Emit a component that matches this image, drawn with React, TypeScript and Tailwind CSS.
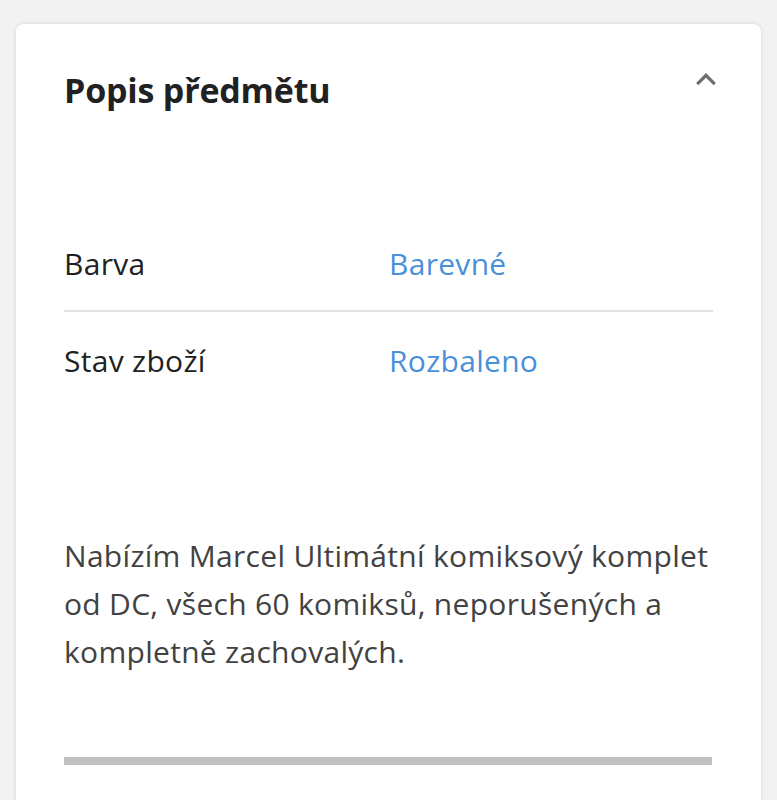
import React from "react";

export default function App() {
  const font = { fontFamily: '"Open Sans", "Noto Sans", sans-serif' };
  return (
    <div className="min-h-[800px] bg-[#f2f2f2] px-4 pt-6" style={font}>
      <div className="rounded-t-lg bg-white shadow-[0_0_4px_rgba(0,0,0,0.12)] px-12 pt-[42px] pb-10 min-h-[776px]">
        <div className="flex items-start justify-between">
          <h2 className="text-[34px] font-bold text-[#212121] leading-[48px] tracking-[-0.2px]">Popis předmětu</h2>
          <svg width="28" height="28" viewBox="0 0 24 24" className="mt-[0px] mr-[-7px]" fill="none" stroke="#6e6e6e" strokeWidth="2.8">
            <path d="M4.5 15.5l7.5-7.5 7.5 7.5" />
          </svg>
        </div>
        <div className="mt-[124px]">
          <div className="flex items-center h-[50px] text-[30px] tracking-[0.3px]">
            <span className="w-[325px] text-[#212121]">Barva</span>
            <span className="text-[#4a90d9]">Barevné</span>
          </div>
          <div className="mt-[22px] border-t-2 border-[#e3e3e3]" />
          <div className="mt-[23px] flex items-center h-[50px] text-[30px] tracking-[0.3px]">
            <span className="w-[325px] text-[#212121]">Stav zboží</span>
            <span className="text-[#4a90d9]">Rozbaleno</span>
          </div>
        </div>
        <p className="mt-[147px] text-[30px] leading-[48px] text-[#424242] tracking-[0.3px]">
          Nabízím Marcel Ultimátní komiksový komplet od DC, všech 60 komiksů, neporušených a kompletně zachovalých.
        </p>
        <div className="mt-[81px] h-2 w-[648px] bg-[#c0c0c0]" />
      </div>
    </div>
  );
}
